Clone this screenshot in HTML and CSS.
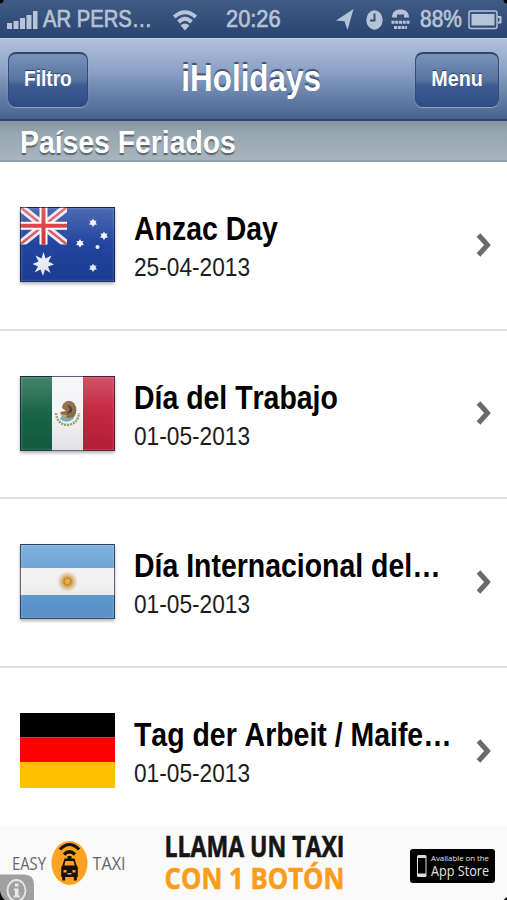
FILE: index.html
```html
<!DOCTYPE html>
<html lang="es">
<head>
  <meta charset="UTF-8">
  <meta name="viewport" content="width=device-width, initial-scale=1.0">
  <title>iHolidays</title>
  <link rel="stylesheet" href="styles.css">
</head>
<body>
  <div class="screen">

    <div class="status-bar">
      <div class="status-left">
        <svg class="signal" width="31" height="20" viewBox="0 0 31 20">
          <path d="M0 13h5v6H0zM6.500 11h5v8h-5zM13 8h5v11h-5zM19.500 5h5v14h-5zM26 1h4.500v18H26z"/>
        </svg>
        <span class="carrier">AR PERS…</span>
        <svg class="wifi" width="26" height="24" viewBox="0 0 26 24">
          <path class="line" d="M2.200 9Q13-.5 23.800 9M6.500 14Q13 7.500 19.500 14"/>
          <path d="M8.500 17.500Q13 13.500 17.500 17.500L13 22.500z"/>
        </svg>
      </div>
      <span class="clock">20:26</span>
      <div class="status-right">
        <svg width="18" height="22" viewBox="0 0 18 22"><path d="M17.500 0 11.500 21 8.500 12.200 0 11.500z"/></svg>
        <svg class="alarm" width="17" height="20" viewBox="0 0 17 20">
          <ellipse cx="8.500" cy="10" rx="8.200" ry="9.700"/>
          <path class="hands" d="M8.500 3.500V10.500H4"/>
        </svg>
        <svg class="tty" width="19" height="22" viewBox="0 0 19 22">
          <path d="M1 8.500C1 3 4.500.5 9.500 .5S18 3 18 8.500H13V5.500H6V8.500z"/>
          <path class="dots" d="M.5 13.300H18.500M3 18.600H16"/>
        </svg>
        <span class="percent">88%</span>
        <svg class="battery" width="34" height="20" viewBox="0 0 34 20">
          <rect class="case" x="1" y="1" width="28" height="17.500" rx="2"/>
          <path d="M3.500 4h23v11.500h-23zM30 6h2.500q1 0 1 1v5.500q0 1-1 1H30v-2h1.500V8H30z"/>
        </svg>
      </div>
    </div>

    <div class="nav-bar">
      <a class="nav-button filtro"><span>Filtro</span></a>
      <h1><span>iHolidays</span></h1>
      <a class="nav-button menu"><span>Menu</span></a>
    </div>

    <h2><span>Países Feriados</span></h2>

    <ul class="holidays">
      <li>
        <div class="flag glossy">
          <svg width="95" height="75" viewBox="0 0 95 75">
            <rect width="95" height="75" fill="#1b3f9c"/>
            <svg width="47" height="37.500">
              <path d="M0 0 47 37.500M47 0 0 37.500" stroke="#e8e9f4" stroke-width="8"/>
              <path d="M0 0 47 37.500M47 0 0 37.500" stroke="#dd4b50" stroke-width="2.500"/>
              <path d="M23.500 0V38M0 18.700H47" stroke="#fff" stroke-width="8"/>
              <path d="M23.500 0V38M0 18.700H47" stroke="#d92a30" stroke-width="4"/>
            </svg>
            <g fill="#f2f5fc">
              <path d="M23.500 45 25.600 51.500 31.500 48.500 28.500 54.500 34 57.500 28 59.500 30.500 66 25 62.500 23 69 20.500 62.500 14.500 65.500 18 59.500 12.500 57 18.500 54.500 15.500 48.500 21.500 51.500z"/>
              <path id="star" d="M73 11.500 74.200 13.700 76.500 13.500 75.500 15.500 77 17.500 74.500 17.800 73 20 71.500 17.800 69 17.500 70.500 15.500 69.500 13.500 71.800 13.700z"/>
              <use href="#star" x="11" y="13"/>
              <use href="#star" x="-13" y="20.500"/>
              <use href="#star" y="45"/>
              <circle cx="77.500" cy="40" r="2"/>
            </g>
          </svg>
        </div>
        <div class="info">
          <h3>Anzac Day</h3>
          <p>25-04-2013</p>
        </div>
        <svg class="chevron" width="16" height="26" viewBox="0 0 16 26"><path d="M2.500 3 11.500 13 2.500 23"/></svg>
      </li>
      <li>
        <div class="flag glossy">
          <svg width="95" height="75" viewBox="0 0 95 75">
            <rect width="32" height="75" fill="#126044"/>
            <rect x="32" width="31" height="75" fill="#f4f4f6"/>
            <rect x="63" width="32" height="75" fill="#c2203a"/>
            <path d="M36 37Q37 48 47 49 58 48 59 37" fill="none" stroke="#8fa06a" stroke-width="2.500" stroke-dasharray="2 1"/>
            <path d="M40 43Q47 49 54 42L52 39H42z" fill="#71b1b5"/>
            <path d="M43 28Q48 22 54 27 59 34 54 41L48 42Q42 41 40 36L46 35 42 32z" fill="#8a6641"/>
            <path d="M47 29Q53 29 52 36L47 38 50 33z" fill="#4d3428"/>
            <path d="M39 38 47 39 46 42z" fill="#c9a352"/>
          </svg>
        </div>
        <div class="info">
          <h3>Día del Trabajo</h3>
          <p>01-05-2013</p>
        </div>
        <svg class="chevron" width="16" height="26" viewBox="0 0 16 26"><path d="M2.500 3 11.500 13 2.500 23"/></svg>
      </li>
      <li>
        <div class="flag glossy">
          <svg width="95" height="75" viewBox="0 0 95 75">
            <defs>
              <radialGradient id="sun">
                <stop offset="0" stop-color="#dba63c"/>
                <stop offset=".4" stop-color="#d09a4a"/>
                <stop offset="1" stop-color="#d9a76a" stop-opacity="0"/>
              </radialGradient>
            </defs>
            <rect width="95" height="75" fill="#5e9ad2"/>
            <rect y="24" width="95" height="27" fill="#f1f1f2"/>
            <circle cx="47.500" cy="37.500" r="10.500" fill="url(#sun)"/>
            <circle cx="47.500" cy="37.500" r="3.500" fill="#e2ac35" stroke="#b87c2a"/>
          </svg>
        </div>
        <div class="info">
          <h3>Día Internacional del…</h3>
          <p>01-05-2013</p>
        </div>
        <svg class="chevron" width="16" height="26" viewBox="0 0 16 26"><path d="M2.500 3 11.500 13 2.500 23"/></svg>
      </li>
      <li>
        <div class="flag">
          <svg width="95" height="75" viewBox="0 0 95 75">
            <rect width="95" height="24.500" fill="#000"/>
            <rect y="24.500" width="95" height="24.500" fill="#fe0000"/>
            <rect y="49" width="95" height="26" fill="#fdc100"/>
          </svg>
        </div>
        <div class="info">
          <h3>Tag der Arbeit / Maife…</h3>
          <p>01-05-2013</p>
        </div>
        <svg class="chevron" width="16" height="26" viewBox="0 0 16 26"><path d="M2.500 3 11.500 13 2.500 23"/></svg>
      </li>
    </ul>

    <div class="ad">
      <svg width="507" height="75" viewBox="0 0 507 75">
        <g class="brand">
          <text x="12" y="45" textLength="34" lengthAdjust="spacingAndGlyphs">EASY</text>
          <text x="92.500" y="45" textLength="33" lengthAdjust="spacingAndGlyphs">TAXI</text>
        </g>
        <ellipse cx="69.500" cy="38" rx="18" ry="22" fill="#fca321"/>
        <g fill="none" stroke="#17120a" stroke-width="3.200">
          <path d="M60 24.500Q69.500 14.500 79 24.500M64 29.500Q69.500 24 75 29.500"/>
        </g>
        <path fill="#17120a" d="M67.500 31h4v2.500h3l2 6.500 1.300 2.500V52h-1v3.500h-3V52h-8.600v3.500h-3V52h-1v-9.500l1.300-2.500 2-6.500h3z"/>
        <path fill="#fca321" d="M65.500 36h8l1.200 4.500H64.300zM63.500 45h3v2.500h-3zM72.500 45h3v2.500h-3zM67.500 48h4v1.500h-4z"/>
        <g class="slogan">
          <text x="164.500" y="31.500" font-size="28" fill="#151515" stroke="#151515" textLength="180" lengthAdjust="spacingAndGlyphs">LLAMA UN TAXI</text>
          <text x="164.500" y="63.500" font-size="29" fill="#fb9d1b" stroke="#fb9d1b" textLength="180" lengthAdjust="spacingAndGlyphs">CON 1 BOTÓN</text>
        </g>
        <rect x="410" y="24" width="85" height="34" rx="3" fill="#000"/>
        <rect x="417" y="30" width="9.500" height="22" rx="1.500" fill="#ddd"/>
        <rect x="418" y="33" width="7.500" height="15.500" fill="#000"/>
        <g class="store">
          <text x="431" y="36" font-size="7.500" textLength="58" lengthAdjust="spacingAndGlyphs">Available on the</text>
          <text x="431" y="51" font-size="15" textLength="58" lengthAdjust="spacingAndGlyphs">App Store</text>
        </g>
        <path d="M0 49.500H24Q34 49.500 34 59.500V75H0z" fill="#a0a0a0"/>
        <ellipse cx="16.500" cy="65.500" rx="9" ry="10.500" fill="none" stroke="#e8e8e8" stroke-width="1.800"/>
        <path d="M15 58.500h3.500v3H15zM14 63.500h4.500v7h1.500v2h-6.500v-2H15v-5h-1z" fill="#e8e8e8"/>
        <path d="M0 66Q1 72 5 75H0zM507 72 503.500 75H507z" fill="#000"/>
      </svg>
    </div>

  </div>
</body>
</html>
```

FILE: styles.css
```css
body {
  margin: 0;
  background-color: #000;
  font-family: "Liberation Sans", Arial, Helvetica, sans-serif;
  font-kerning: none;
}

.screen {
  width: 507px;
  height: 900px;
  display: flex;
  flex-direction: column;
  overflow: hidden;
  background-color: #fff;
}

h1, h2, h3, p, ul {
  margin: 0;
  padding: 0;
}

/* status bar */
.status-bar {
  flex: none;
  height: 38px;
  box-sizing: border-box;
  padding: 0 5px 0 7px;
  display: grid;
  grid-template-columns: 1fr 55px 1fr;
  align-items: center;
  background: radial-gradient(circle at 0 0, #000 3px, transparent 4px),
              radial-gradient(circle at 100% 0, #000 3px, transparent 4px),
              linear-gradient(#405b85, #294470);
  color: #b7c3d6;
  font-size: 23px;
  line-height: 39px;
  -webkit-text-stroke: 0.7px #b7c3d6;
}

.status-bar svg {
  flex: none;
  fill: #b7c3d6;
}

.status-left,
.status-right {
  display: flex;
  align-items: center;
  height: 38px;
}

.status-right {
  justify-content: flex-end;
}

.carrier,
.clock,
.percent {
  white-space: nowrap;
  transform: scaleX(0.88);
  transform-origin: left;
}

.clock {
  margin-left: -1px;
  transform: scaleX(0.95);
}

.carrier {
  width: 110px;
  margin-left: 5px;
}

.percent {
  width: 42px;
  margin-left: 10px;
  transform: scaleX(0.91);
}

.wifi {
  margin-left: 19px;
}

.wifi .line {
  fill: none;
  stroke: #b7c3d6;
  stroke-width: 4;
}

.alarm {
  margin-left: 12px;
}

.alarm .hands {
  fill: none;
  stroke: #344f7b;
  stroke-width: 2;
}

.tty {
  margin-left: 8px;
}

.tty .dots {
  fill: none;
  stroke: #b7c3d6;
  stroke-width: 3;
  stroke-dasharray: 3 0.750;
}

.battery {
  margin-left: 6px;
}

.battery .case {
  fill: none;
  stroke: #b7c3d6;
  stroke-width: 1.500;
}

/* navigation bar */
.nav-bar {
  flex: none;
  height: 83px;
  box-sizing: border-box;
  padding: 0 8px;
  display: flex;
  justify-content: space-between;
  align-items: center;
  background: linear-gradient(#b1c1dc, #8ba1c5 40%, #6880aa 70%, #476392);
  border-top: 1px solid #c8d3e6;
  border-bottom: 2px solid #2e486f;
  color: #fff;
}

.nav-bar span,
h2 span {
  display: inline-block;
  white-space: nowrap;
}

.nav-button {
  height: 55px;
  box-sizing: border-box;
  display: flex;
  justify-content: center;
  border: 1px solid #304c79;
  border-top: 2px solid #2f466d;
  border-radius: 8px;
  background: linear-gradient(#7a92ba, #56749f 50%, #3e5d93 60%, #2d4d85);
  box-shadow: 0 1px 1px rgba(255, 255, 255, 0.4);
  font-size: 21.5px;
  font-weight: bold;
  line-height: 51px;
  text-shadow: 0 -1px 1px #2a3f62;
}

.filtro {
  width: 80px;
}

.filtro span {
  transform: scaleX(0.89);
}

.menu {
  width: 84px;
}

.menu span {
  transform: scaleX(0.92);
}

h1 {
  font-size: 36.5px;
  line-height: 82px;
  text-shadow: 0 -2px 1px #3d5272;
}

h1 span {
  transform: scaleX(0.86);
}

/* section title */
h2 {
  flex: none;
  height: 41px;
  box-sizing: border-box;
  padding-left: 20px;
  background: linear-gradient(#8294a0, #96a5af 30%, #a9b5be);
  border-bottom: 2px solid #929da5;
  color: #fff;
  font-size: 31.5px;
  line-height: 42px;
  text-shadow: 0 2px 1px #59646c;
}

h2 span {
  transform: scaleX(0.9);
  transform-origin: left;
}

/* list */
.holidays {
  flex: 1;
  min-height: 0;
  overflow: hidden;
  list-style: none;
}

.holidays li {
  height: 168.600px;
  box-sizing: border-box;
  padding: 0 15px 1px 20px;
  display: flex;
  align-items: center;
  border-bottom: 2px solid #dedede;
}

.flag {
  flex: none;
  width: 95px;
  height: 75px;
  position: relative;
}

.flag svg {
  display: block;
}

.glossy {
  box-shadow: 0 2px 3px rgba(0, 0, 0, 0.3);
}

.glossy::after {
  content: "";
  position: absolute;
  inset: 0;
  border: 1px solid rgba(20, 25, 50, 0.65);
  background: linear-gradient(rgba(255, 255, 255, 0.22), rgba(255, 255, 255, 0.03) 50%, rgba(0, 0, 0, 0.08));
  box-shadow: inset 0 0 3px rgba(255, 255, 255, 0.3);
  box-sizing: border-box;
}

.info {
  flex: 1;
  min-width: 0;
  padding: 8px 0 0 19px;
  white-space: nowrap;
}

h3 {
  font-size: 32.5px;
  line-height: 37px;
  transform: scaleX(0.875);
  transform-origin: left;
}

.info p {
  color: #1c1c1c;
  font-size: 25.5px;
  line-height: 38px;
  transform: scaleX(0.89);
  transform-origin: left;
}

.chevron {
  flex: none;
  fill: none;
  stroke: #6b6b6b;
  stroke-width: 5;
}

/* banner */
.ad {
  flex: none;
  height: 75px;
  background-color: #fafafa;
}

.ad svg {
  display: block;
}

.brand {
  font-family: "Open Sans", sans-serif;
  font-size: 18px;
  fill: #666;
}

.slogan {
  font-family: "Open Sans", sans-serif;
  font-weight: 700;
  stroke-width: 0.600;
}

.store {
  font-family: "Open Sans", sans-serif;
  font-weight: 500;
  fill: #e6e6e6;
}
```
